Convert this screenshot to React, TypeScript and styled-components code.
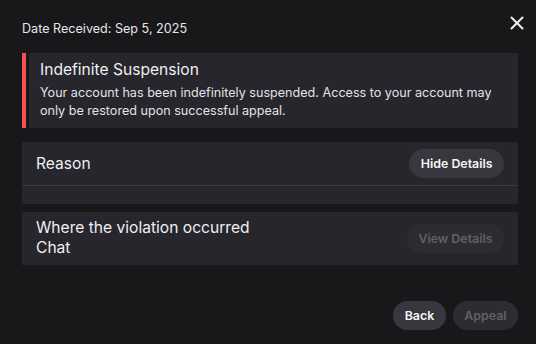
import styled, { createGlobalStyle } from "styled-components";
import { X } from "lucide-react";

const GlobalStyle = createGlobalStyle`
  html, body {
    margin: 0;
    padding: 0;
    background: #18181b;
  }
  * {
    box-sizing: border-box;
  }
`;

type Detail = {
  title: string[];
  action: string;
  open: boolean;
  disabled?: boolean;
};

const details: Detail[] = [
  { title: ["Reason"], action: "Hide Details", open: true },
  {
    title: ["Where the violation occurred", "Chat"],
    action: "View Details",
    open: false,
    disabled: true,
  },
];

const App = () => {
  return (
    <>
      <GlobalStyle />
      <SModal>
        <SClose aria-label="Close">
          <X size={22} strokeWidth={2.2} />
        </SClose>
        <SDate>Date Received: Sep 5, 2025</SDate>
        <SAlert>
          <SAlertBar />
          <SAlertBody>
            <SAlertTitle>Indefinite Suspension</SAlertTitle>
            <SAlertText>
              Your account has been indefinitely suspended. Access to your account may
              <br />
              only be restored upon successful appeal.
            </SAlertText>
          </SAlertBody>
        </SAlert>
        <SCards>
          {details.map((d) => (
            <SCard key={d.action + d.title[0]}>
              <SCardHead compact={d.title.length > 1}>
                <SCardTitle>
                  {d.title.map((line) => (
                    <div key={line}>{line}</div>
                  ))}
                </SCardTitle>
                <SPill disabled={d.disabled}>{d.action}</SPill>
              </SCardHead>
              {d.open && <SCardBody />}
            </SCard>
          ))}
        </SCards>
        <SFooter>
          <SPill>Back</SPill>
          <SPill disabled>Appeal</SPill>
        </SFooter>
      </SModal>
    </>
  );
};

export default App;

const SModal = styled.div`
  position: relative;
  width: 536px;
  height: 344px;
  display: flex;
  flex-direction: column;
  padding: 20px 18px 14px 22px;
  background: #18181b;
  color: #efeff1;
  font-family: Inter, "Noto Sans", sans-serif;
`;

const SClose = styled.button`
  position: absolute;
  top: 12px;
  right: 8px;
  width: 22px;
  height: 22px;
  padding: 0;
  border: none;
  background: transparent;
  color: #efeff1;
  display: flex;
  align-items: center;
  justify-content: center;
`;

const SDate = styled.div`
  font-size: 12.6px;
  line-height: 18px;
  color: #e6e6ea;
`;

const SAlert = styled.div`
  display: flex;
  gap: 3px;
  margin-top: 15px;
`;

const SAlertBar = styled.div`
  width: 4px;
  flex: none;
  background: #f85052;
`;

const SAlertBody = styled.div`
  flex: 1;
  background: #26262c;
  padding: 7px 10px 8px 11px;
`;

const SAlertTitle = styled.div`
  font-size: 15.6px;
  line-height: 20px;
  font-weight: 400;
  margin-bottom: 4px;
`;

const SAlertText = styled.div`
  font-size: 12.6px;
  line-height: 18px;
  color: #e2e2e6;
`;

const SCards = styled.div`
  display: flex;
  flex-direction: column;
  gap: 8px;
  margin-top: 14px;
`;

const SCard = styled.div`
  background: #26262c;
`;

const SCardHead = styled.div<{ compact: boolean }>`
  display: flex;
  align-items: center;
  justify-content: space-between;
  padding: ${({ compact }) => (compact ? "6px 14px 7px" : "7px 14px")};
  min-height: 43px;
`;

const SCardTitle = styled.div`
  font-size: 15.6px;
  line-height: 20px;
  font-weight: 400;
`;

const SCardBody = styled.div`
  height: 19px;
  border-top: 1px solid #3a3a40;
`;

const SPill = styled.button`
  height: 29px;
  padding: 0 11.5px;
  border: none;
  border-radius: 999px;
  font-family: Inter, "Noto Sans", sans-serif;
  font-size: 12.4px;
  font-weight: 600;
  background: ${({ disabled }) => (disabled ? "#2c2c31" : "#37373d")};
  color: ${({ disabled }) => (disabled ? "#606066" : "#f4f4f6")};
`;

const SFooter = styled.div`
  margin-top: auto;
  display: flex;
  justify-content: flex-end;
  gap: 7px;
`;
